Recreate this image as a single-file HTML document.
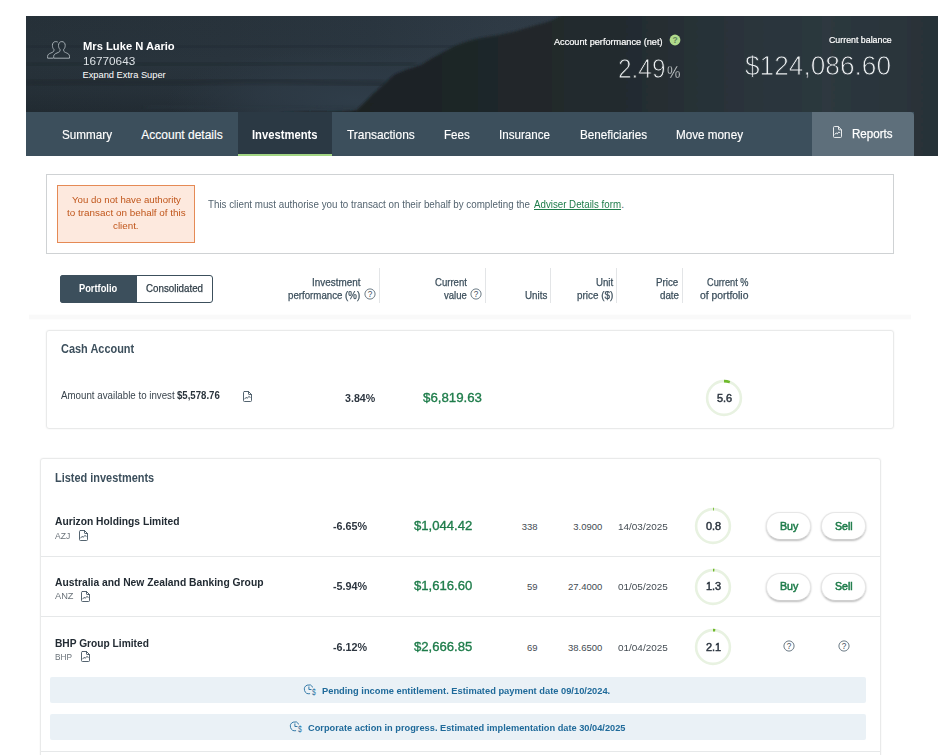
<!DOCTYPE html>
<html lang="en"><head><meta charset="utf-8"><title>Investments</title>
<style>
html,body{margin:0;padding:0;background:#fff;}
body{width:948px;height:755px;overflow:hidden;position:relative;font-family:"Liberation Sans",sans-serif;}
.t{position:absolute;white-space:nowrap;display:block;transform-origin:0 50%;}
.a{position:absolute;box-sizing:border-box;}
svg{position:absolute;overflow:visible;}
.btn{position:absolute;box-sizing:border-box;width:45px;height:28px;border-radius:14px;border:1px solid #e7e7e7;border-bottom-color:#cfcfcf;background:#fff;box-shadow:0 1px 2px rgba(0,0,0,.26);}
.sep{position:absolute;width:1px;top:268px;height:35px;background:#e3e5e7;}
.div{position:absolute;left:41px;width:839px;height:1px;background:#e6e8e9;}
.note{position:absolute;left:50px;width:816px;background:#eaf1f6;border-radius:2px;}
</style></head><body>

<!-- header background -->
<div class="a" style="left:26px;top:16px;width:912px;height:140px;background:linear-gradient(180deg,rgba(16,21,25,.06) 0%,rgba(16,21,25,0) 35%,rgba(16,21,25,.10) 55%,rgba(16,21,25,.36) 78%,rgba(16,21,25,.60) 100%),linear-gradient(90deg,#27323a 0%,#29343d 22%,#2b3741 38%,#303c47 52%,#323e49 62%,#2a3640 100%);overflow:hidden;">
<svg width="912" height="140" viewBox="0 0 912 140" style="left:0;top:0">
<defs>
<linearGradient id="hg" gradientUnits="userSpaceOnUse" x1="300" y1="0" x2="912" y2="0"><stop offset="0" stop-color="#1c2123"/><stop offset="0.30" stop-color="#20272a"/><stop offset="0.50" stop-color="#242c30"/><stop offset="0.66" stop-color="#29333a"/><stop offset="0.82" stop-color="#2d383f"/><stop offset="1" stop-color="#283238"/></linearGradient>
<radialGradient id="glow" cx="0.5" cy="0.5" r="0.5"><stop offset="0" stop-color="#2f3d49" stop-opacity="1"/><stop offset="0.5" stop-color="#2e3b47" stop-opacity="0.700"/><stop offset="1" stop-color="#2c3944" stop-opacity="0"/></radialGradient>
<filter id="bl" x="-10%" y="-10%" width="120%" height="120%"><feGaussianBlur stdDeviation="0.900"/></filter>
<filter id="bl2" x="-30%" y="-30%" width="160%" height="160%"><feGaussianBlur stdDeviation="2.600"/></filter>
</defs>
<ellipse cx="330" cy="84" rx="190" ry="52" fill="url(#glow)"/>
<path filter="url(#bl2)" d="M0 49 C80 46 160 51 260 47 C300 46 340 49 390 48" fill="none" stroke="#1d262c" stroke-width="6" opacity="0.450"/>
<path filter="url(#bl2)" d="M0 67 C60 64 130 69 200 65 C250 63 290 67 360 68" fill="none" stroke="#1a2228" stroke-width="6" opacity="0.450"/>
<path filter="url(#bl2)" d="M0 31 C90 29 170 33 270 30 C330 29 380 31 430 30" fill="none" stroke="#1f282f" stroke-width="5" opacity="0.400"/>
<path filter="url(#bl2)" d="M120 92 C180 89 240 92 290 90 C310 89 325 91 335 90" fill="none" stroke="#2c3740" stroke-width="2.500" opacity="0.700"/>
<path filter="url(#bl)" d="M255 97 C290 95 312 97 331 94 C338 87 342 83 347 78 C355 71 361 65 368 59 C378 54 386 52 395 49 C401 45 406 42 412 39 C419 35 425 32 431 29 C439 26 445 24 452 22.500 C460 21 466 20 473 19 C481 17 487 16 494 14 C503 11 510 9 518 7 C524 5 529 3 534 0 L540 -4 L930 -4 L930 145 L240 145 Z" fill="url(#hg)"/>
</svg>
</div>

<!-- nav -->
<div class="a" style="left:26px;top:112px;width:888px;height:44px;background:#3c4f5c;"></div>
<div class="a" style="left:238px;top:112px;width:94px;height:44px;background:#2b3944;border-bottom:2px solid #a2d583;"></div>
<div class="a" style="left:811.5px;top:112px;width:102.5px;height:44px;background:#5e6f7b;border-radius:0 4px 0 0;"></div>

<!-- people icon -->
<svg width="24" height="18" viewBox="0 0 24 18" style="left:45.500px;top:40.500px;transform:scaleX(-1)" fill="none" stroke="#a4adb3" stroke-width="1">
<path d="M8.2 0.6c2.1 0 3.3 1.6 3.3 3.8 0 1.6-.5 3.1-1.5 3.9v1.5c0 .8 1.3 1.5 3 2.2 1.8.7 3.3 1.500 3.300 3.300v1.900H0.500v-1.900c0-1.800 1.200-2.600 2.800-3.300 1.700-.7 3-1.400 3-2.200V8.300c-1-.8-1.500-2.300-1.500-3.900 0-2.200 1.300-3.800 3.400-3.800z"/>
<path d="M12.2 1.100c.6-.3 1.300-.5 2.100-.5 2.100 0 3.300 1.600 3.300 3.800 0 1.600-.5 3.100-1.500 3.900v1.500c0 .8 1.300 1.500 3 2.200 1.800.7 3.300 1.500 3.300 3.300v1.900h-5.600"/>
</svg>

<!-- green help -->
<svg width="12" height="12" viewBox="0 0 12 12" style="left:669.400px;top:33.500px"><circle cx="6" cy="6" r="5.400" fill="#b0da8c"/><text x="6" y="8.900" font-family="Liberation Sans, sans-serif" font-size="8.500" font-weight="bold" fill="#5f8459" text-anchor="middle">?</text></svg>

<!-- reports icon -->
<svg width="9" height="12" viewBox="0 0 9 11" preserveAspectRatio="none" style="left:833px;top:126.200px" fill="none" stroke="#f2f4f5" stroke-width="0.900"><path d="M1.400 0.500h4.100l3 3v6.100a.9.900 0 0 1-.9.900h-6.200a.9.900 0 0 1-.9-.9v-8.200a.9.900 0 0 1 .9-.9z"/><path d="M5.500 0.500v2.400a.6.600 0 0 0 .6.600h2.400"/><path d="M1.800 7.900l1.300-1.600 1.200 1 1.400-1.800 1.500.7"/></svg>

<!-- alert -->
<div class="a" style="left:46px;top:174px;width:848px;height:80px;border:1px solid #cfd2d4;"></div>
<div class="a" style="left:57px;top:185px;width:138px;height:58px;background:#fde9de;border:1px solid #e58a55;"></div>

<!-- toggle -->
<div class="a" style="left:60px;top:275px;width:153px;height:28px;border:1px solid #3c4f5c;border-radius:3px;background:#fff;"></div>
<div class="a" style="left:60px;top:275px;width:77px;height:28px;background:#3c4f5c;border-radius:3px 0 0 3px;"></div>

<!-- table head separators -->
<div class="sep" style="left:379px"></div><div class="sep" style="left:485px"></div><div class="sep" style="left:550px"></div><div class="sep" style="left:616px"></div><div class="sep" style="left:682px"></div>

<!-- help icons in header row -->
<svg width="12" height="12" viewBox="0 0 12 12" style="left:363.800px;top:287.600px"><circle cx="6" cy="6" r="5.100" fill="none" stroke="#64747f" stroke-width="0.950"/><text x="6" y="8.900" font-family="Liberation Sans, sans-serif" font-size="8.200" fill="#3f4f5a" text-anchor="middle">?</text></svg>
<svg width="12" height="12" viewBox="0 0 12 12" style="left:470.100px;top:287.600px"><circle cx="6" cy="6" r="5.100" fill="none" stroke="#64747f" stroke-width="0.950"/><text x="6" y="8.900" font-family="Liberation Sans, sans-serif" font-size="8.200" fill="#3f4f5a" text-anchor="middle">?</text></svg>

<!-- sticky shadow -->
<div class="a" style="left:29px;top:313.500px;width:881.500px;height:6px;background:linear-gradient(180deg,rgba(0,0,0,0) 0%,rgba(0,0,0,.022) 25%,rgba(0,0,0,.022) 75%,rgba(0,0,0,0) 100%);"></div>

<!-- cash card -->
<div class="a" style="left:46px;top:330px;width:848px;height:99px;border:1px solid #e9eaea;border-radius:3px;box-shadow:0 0 1.500px rgba(0,0,0,.09);"></div>
<svg width="9" height="11" viewBox="0 0 9 11" style="left:243px;top:391px" fill="none" stroke="#4b5c68" stroke-width="0.950" stroke-linejoin="round" stroke-linecap="round"><path d="M1.400 0.500h4.100l3 3v6.100a.9.900 0 0 1-.9.900h-6.200a.9.900 0 0 1-.9-.9v-8.200a.9.900 0 0 1 .9-.9z"/><path d="M5.500 0.500v2.400a.6.600 0 0 0 .6.600h2.400"/><path d="M1.800 7.900l1.300-1.600 1.200 1 1.400-1.800 1.500.7"/></svg>

<!-- donut cash -->
<svg width="38" height="38" viewBox="-19 -19 38 38" style="left:705.200px;top:379px"><circle r="16.900" fill="none" stroke="#e8f2e1" stroke-width="2.600"/><path d="M0 -16.900 A16.900 16.900 0 0 1 5.830 -15.860" fill="none" stroke="#6fba2c" stroke-width="2.600"/></svg>

<!-- listed card -->
<div class="a" style="left:40px;top:458px;width:841px;height:320px;border:1px solid #e9eaea;border-radius:3px;box-shadow:0 0 1.500px rgba(0,0,0,.09);"></div>
<div class="div" style="top:556px"></div>
<div class="div" style="top:616px"></div>
<div class="div" style="top:751px"></div>

<!-- doc icons rows -->
<svg width="9" height="11" viewBox="0 0 9 11" style="left:79px;top:530px" fill="none" stroke="#4b5c68" stroke-width="0.950" stroke-linejoin="round" stroke-linecap="round"><path d="M1.400 0.500h4.100l3 3v6.100a.9.900 0 0 1-.9.900h-6.200a.9.900 0 0 1-.9-.9v-8.200a.9.900 0 0 1 .9-.9z"/><path d="M5.500 0.500v2.400a.6.600 0 0 0 .6.600h2.400"/><path d="M1.800 7.900l1.300-1.600 1.200 1 1.400-1.800 1.500.7"/></svg>
<svg width="9" height="11" viewBox="0 0 9 11" style="left:81px;top:590.500px" fill="none" stroke="#4b5c68" stroke-width="0.950" stroke-linejoin="round" stroke-linecap="round"><path d="M1.400 0.500h4.100l3 3v6.100a.9.900 0 0 1-.9.900h-6.200a.9.900 0 0 1-.9-.9v-8.200a.9.900 0 0 1 .9-.9z"/><path d="M5.500 0.500v2.400a.6.600 0 0 0 .6.600h2.400"/><path d="M1.800 7.900l1.300-1.600 1.200 1 1.400-1.800 1.500.7"/></svg>
<svg width="9" height="11" viewBox="0 0 9 11" style="left:80.600px;top:651.400px" fill="none" stroke="#4b5c68" stroke-width="0.950" stroke-linejoin="round" stroke-linecap="round"><path d="M1.400 0.500h4.100l3 3v6.100a.9.900 0 0 1-.9.900h-6.200a.9.900 0 0 1-.9-.9v-8.200a.9.900 0 0 1 .9-.9z"/><path d="M5.500 0.500v2.400a.6.600 0 0 0 .6.600h2.400"/><path d="M1.800 7.900l1.300-1.600 1.200 1 1.400-1.800 1.500.7"/></svg>

<!-- donuts rows -->
<svg width="38" height="38" viewBox="-19 -19 38 38" style="left:694.400px;top:507px"><circle r="16.900" fill="none" stroke="#e8f2e1" stroke-width="2.600"/><path d="M0 -16.900 A16.900 16.900 0 0 1 0.850 -16.880" fill="none" stroke="#6fba2c" stroke-width="2.600"/></svg>
<svg width="38" height="38" viewBox="-19 -19 38 38" style="left:694.400px;top:567.600px"><circle r="16.900" fill="none" stroke="#e8f2e1" stroke-width="2.600"/><path d="M0 -16.900 A16.900 16.900 0 0 1 1.380 -16.840" fill="none" stroke="#6fba2c" stroke-width="2.600"/></svg>
<svg width="38" height="38" viewBox="-19 -19 38 38" style="left:694.400px;top:628px"><circle r="16.900" fill="none" stroke="#e8f2e1" stroke-width="2.600"/><path d="M0 -16.900 A16.900 16.900 0 0 1 2.220 -16.750" fill="none" stroke="#6fba2c" stroke-width="2.600"/></svg>

<!-- buttons -->
<div class="btn" style="left:766px;top:512px"></div><div class="btn" style="left:821px;top:512px"></div>
<div class="btn" style="left:766px;top:572.500px"></div><div class="btn" style="left:821px;top:572.500px"></div>

<!-- row3 help icons -->
<svg width="12" height="12" viewBox="0 0 12 12" style="left:782.900px;top:639.500px"><circle cx="6" cy="6" r="5.100" fill="none" stroke="#64747f" stroke-width="0.950"/><text x="6" y="8.900" font-family="Liberation Sans, sans-serif" font-size="8.200" fill="#3f4f5a" text-anchor="middle">?</text></svg>
<svg width="12" height="12" viewBox="0 0 12 12" style="left:837.900px;top:639.500px"><circle cx="6" cy="6" r="5.100" fill="none" stroke="#64747f" stroke-width="0.950"/><text x="6" y="8.900" font-family="Liberation Sans, sans-serif" font-size="8.200" fill="#3f4f5a" text-anchor="middle">?</text></svg>

<!-- notices -->
<div class="note" style="top:677.300px;height:25.500px"></div>
<div class="note" style="top:714.200px;height:25.800px"></div>
<svg width="13" height="12" viewBox="0 0 13 12" style="left:304px;top:684px" fill="none" stroke="#2a73a3" stroke-width="0.950" stroke-linecap="round"><path d="M8.800 3.050A4.500 4.500 0 1 0 5.700 9.730"/><path d="M4.900 2.900v2.600h2.200"/><text x="9.900" y="11.300" font-family="Liberation Sans, sans-serif" font-size="8.300" textLength="3.800" lengthAdjust="spacingAndGlyphs" fill="#2a73a3" stroke="none" text-anchor="middle">$</text></svg>
<svg width="13" height="12" viewBox="0 0 13 12" style="left:289.500px;top:721.300px" fill="none" stroke="#2a73a3" stroke-width="0.950" stroke-linecap="round"><path d="M8.800 3.050A4.500 4.500 0 1 0 5.700 9.730"/><path d="M4.900 2.900v2.600h2.200"/><text x="9.900" y="11.300" font-family="Liberation Sans, sans-serif" font-size="8.300" textLength="3.800" lengthAdjust="spacingAndGlyphs" fill="#2a73a3" stroke="none" text-anchor="middle">$</text></svg>

<span class="t" style="left:82.50px;top:40.35px;font-size:11.7px;line-height:11.7px;color:#fff;font-weight:bold;transform:scaleX(0.9583);">Mrs Luke N Aario</span>
<span class="t" style="left:82.50px;top:55.52px;font-size:11.5px;line-height:11.5px;color:#dde2e6;transform:scaleX(1.0201);">16770643</span>
<span class="t" style="left:82.50px;top:71.38px;font-size:9.3px;line-height:9.3px;color:#fff;">Expand Extra Super</span>
<span class="t" style="left:554.00px;top:37.63px;font-size:9px;line-height:9px;color:#fff;transform:scaleX(1.0182);-webkit-text-stroke:0.2px currentColor;">Account performance (net)</span>
<span class="t" style="left:828.80px;top:35.63px;font-size:9px;line-height:9px;color:#fff;transform:scaleX(0.9790);-webkit-text-stroke:0.2px currentColor;">Current balance</span>
<span class="t" style="left:744.80px;top:51.38px;font-size:28.2px;line-height:28.2px;color:#eef1f3;transform:scaleX(0.9313);-webkit-text-stroke:0.9px #2c373e;">$124,086.60</span>
<span class="t" style="left:618.00px;top:54.97px;font-size:27.5px;line-height:27.5px;color:#eef1f3;transform:scaleX(0.8873);-webkit-text-stroke:0.9px #252d31;">2.49</span>
<span class="t" style="left:666.50px;top:64.71px;font-size:16px;line-height:16px;color:#eef1f3;transform:scaleX(0.9484);-webkit-text-stroke:0.4px #252d31;">%</span>
<a class="t" style="left:61.50px;top:129.09px;font-size:12px;line-height:12px;color:#fff;transform:scaleX(0.9738);-webkit-text-stroke:0.15px currentColor;">Summary</a>
<a class="t" style="left:141.30px;top:129.09px;font-size:12px;line-height:12px;color:#fff;-webkit-text-stroke:0.15px currentColor;">Account details</a>
<a class="t" style="left:252.20px;top:129.09px;font-size:12px;line-height:12px;color:#fff;font-weight:bold;transform:scaleX(0.9353);">Investments</a>
<a class="t" style="left:347.30px;top:129.09px;font-size:12px;line-height:12px;color:#fff;transform:scaleX(0.9919);-webkit-text-stroke:0.15px currentColor;">Transactions</a>
<a class="t" style="left:444.30px;top:129.09px;font-size:12px;line-height:12px;color:#fff;transform:scaleX(0.9630);-webkit-text-stroke:0.15px currentColor;">Fees</a>
<a class="t" style="left:499.00px;top:129.09px;font-size:12px;line-height:12px;color:#fff;transform:scaleX(0.9677);-webkit-text-stroke:0.15px currentColor;">Insurance</a>
<a class="t" style="left:579.50px;top:129.09px;font-size:12px;line-height:12px;color:#fff;transform:scaleX(0.9752);-webkit-text-stroke:0.15px currentColor;">Beneficiaries</a>
<a class="t" style="left:676.00px;top:129.09px;font-size:12px;line-height:12px;color:#fff;transform:scaleX(0.9752);-webkit-text-stroke:0.15px currentColor;">Move money</a>
<a class="t" style="left:851.50px;top:128.09px;font-size:12px;line-height:12px;color:#fff;transform:scaleX(0.9636);-webkit-text-stroke:0.25px currentColor;">Reports</a>
<span class="t" style="left:71.55px;top:195.21px;font-size:9.5px;line-height:9.5px;color:#c0561b;transform:scaleX(1.0139);">You do not have authority</span>
<span class="t" style="left:66.65px;top:208.21px;font-size:9.5px;line-height:9.5px;color:#c0561b;transform:scaleX(1.0405);">to transact on behalf of this</span>
<span class="t" style="left:113.20px;top:221.21px;font-size:9.5px;line-height:9.5px;color:#c0561b;transform:scaleX(1.0311);">client.</span>
<span class="t" style="left:208.00px;top:199.62px;font-size:10.2px;line-height:10.2px;color:#53636f;transform:scaleX(0.9605);">This client must authorise you to transact on their behalf by completing the</span>
<a class="t" style="left:534.00px;top:199.62px;font-size:10.2px;line-height:10.2px;color:#1e7c4a;transform:scaleX(0.9544);text-decoration:underline;">Adviser Details form</a>
<span class="t" style="left:621.30px;top:199.62px;font-size:10.2px;line-height:10.2px;color:#53636f;">.</span>
<span class="t" style="left:78.70px;top:283.53px;font-size:10.3px;line-height:10.3px;color:#fff;font-weight:bold;transform:scaleX(0.9025);">Portfolio</span>
<span class="t" style="left:145.80px;top:283.53px;font-size:10.3px;line-height:10.3px;color:#2f3d47;transform:scaleX(0.9483);-webkit-text-stroke:0.25px currentColor;">Consolidated</span>
<span class="t" style="left:312.00px;top:277.53px;font-size:10.3px;line-height:10.3px;color:#3c4f5c;transform:scaleX(0.9608);-webkit-text-stroke:0.25px currentColor;">Investment</span>
<span class="t" style="left:288.20px;top:290.53px;font-size:10.3px;line-height:10.3px;color:#3c4f5c;transform:scaleX(0.9415);-webkit-text-stroke:0.25px currentColor;">performance (%)</span>
<span class="t" style="left:435.10px;top:277.53px;font-size:10.3px;line-height:10.3px;color:#3c4f5c;transform:scaleX(0.9288);-webkit-text-stroke:0.25px currentColor;">Current</span>
<span class="t" style="left:444.20px;top:290.53px;font-size:10.3px;line-height:10.3px;color:#3c4f5c;transform:scaleX(0.9259);-webkit-text-stroke:0.25px currentColor;">value</span>
<span class="t" style="left:524.70px;top:290.53px;font-size:10.3px;line-height:10.3px;color:#3c4f5c;transform:scaleX(0.9502);-webkit-text-stroke:0.25px currentColor;">Units</span>
<span class="t" style="left:595.80px;top:277.53px;font-size:10.3px;line-height:10.3px;color:#3c4f5c;transform:scaleX(0.9392);-webkit-text-stroke:0.25px currentColor;">Unit</span>
<span class="t" style="left:576.80px;top:290.53px;font-size:10.3px;line-height:10.3px;color:#3c4f5c;transform:scaleX(0.9585);-webkit-text-stroke:0.25px currentColor;">price ($)</span>
<span class="t" style="left:656.20px;top:277.53px;font-size:10.3px;line-height:10.3px;color:#3c4f5c;transform:scaleX(0.9502);-webkit-text-stroke:0.25px currentColor;">Price</span>
<span class="t" style="left:659.50px;top:290.53px;font-size:10.3px;line-height:10.3px;color:#3c4f5c;transform:scaleX(0.9478);-webkit-text-stroke:0.25px currentColor;">date</span>
<span class="t" style="left:706.50px;top:277.53px;font-size:10.3px;line-height:10.3px;color:#3c4f5c;transform:scaleX(0.8952);-webkit-text-stroke:0.25px currentColor;">Current %</span>
<span class="t" style="left:699.60px;top:290.53px;font-size:10.3px;line-height:10.3px;color:#3c4f5c;transform:scaleX(1.0064);-webkit-text-stroke:0.25px currentColor;">of portfolio</span>
<span class="t" style="left:60.80px;top:342.92px;font-size:12.2px;line-height:12.2px;color:#3c4f5c;font-weight:bold;transform:scaleX(0.8982);">Cash Account</span>
<span class="t" style="left:60.50px;top:390.79px;font-size:10px;line-height:10px;color:#39444d;transform:scaleX(0.9740);">Amount available to invest</span>
<span class="t" style="left:177.20px;top:390.79px;font-size:10px;line-height:10px;color:#2a343c;font-weight:bold;transform:scaleX(0.9618);">$5,578.76</span>
<span class="t" style="left:345.00px;top:392.52px;font-size:11.5px;line-height:11.5px;color:#2d3640;font-weight:bold;transform:scaleX(0.9261);">3.84%</span>
<span class="t" style="left:422.50px;top:390.82px;font-size:13.5px;line-height:13.5px;color:#1e7c4a;transform:scaleX(0.9823);-webkit-text-stroke:0.35px currentColor;">$6,819.63</span>
<span class="t" style="left:716.60px;top:392.52px;font-size:11.5px;line-height:11.5px;color:#2d3640;transform:scaleX(0.9500);-webkit-text-stroke:0.5px currentColor;">5.6</span>
<span class="t" style="left:54.80px;top:471.92px;font-size:12.2px;line-height:12.2px;color:#3c4f5c;font-weight:bold;transform:scaleX(0.8985);">Listed investments</span>
<span class="t" style="left:54.80px;top:515.52px;font-size:11.5px;line-height:11.5px;color:#222b33;font-weight:bold;transform:scaleX(0.8939);">Aurizon Holdings Limited</span>
<span class="t" style="left:54.80px;top:532.05px;font-size:8.5px;line-height:8.5px;color:#6b737a;transform:scaleX(1.0050);">AZJ</span>
<span class="t" style="left:332.90px;top:520.52px;font-size:11.5px;line-height:11.5px;color:#2d3640;font-weight:bold;transform:scaleX(0.9386);">-6.65%</span>
<span class="t" style="left:413.90px;top:518.82px;font-size:13.5px;line-height:13.5px;color:#1e7c4a;transform:scaleX(0.9707);-webkit-text-stroke:0.35px currentColor;">$1,044.42</span>
<span class="t" style="left:521.64px;top:522.21px;font-size:9.5px;line-height:9.5px;color:#444c53;">338</span>
<span class="t" style="left:573.24px;top:522.21px;font-size:9.5px;line-height:9.5px;color:#444c53;">3.0900</span>
<span class="t" style="left:617.50px;top:522.21px;font-size:9.5px;line-height:9.5px;color:#444c53;transform:scaleX(1.0474);">14/03/2025</span>
<span class="t" style="left:705.80px;top:520.52px;font-size:11.5px;line-height:11.5px;color:#2d3640;transform:scaleX(0.9500);-webkit-text-stroke:0.5px currentColor;">0.8</span>
<span class="t" style="left:54.80px;top:576.52px;font-size:11.5px;line-height:11.5px;color:#222b33;font-weight:bold;transform:scaleX(0.8964);">Australia and New Zealand Banking Group</span>
<span class="t" style="left:54.80px;top:592.05px;font-size:8.5px;line-height:8.5px;color:#6b737a;transform:scaleX(1.0882);">ANZ</span>
<span class="t" style="left:332.90px;top:580.52px;font-size:11.5px;line-height:11.5px;color:#2d3640;font-weight:bold;transform:scaleX(0.9386);">-5.94%</span>
<span class="t" style="left:413.90px;top:578.82px;font-size:13.5px;line-height:13.5px;color:#1e7c4a;transform:scaleX(0.9707);-webkit-text-stroke:0.35px currentColor;">$1,616.60</span>
<span class="t" style="left:526.92px;top:582.21px;font-size:9.5px;line-height:9.5px;color:#444c53;">59</span>
<span class="t" style="left:567.96px;top:582.21px;font-size:9.5px;line-height:9.5px;color:#444c53;">27.4000</span>
<span class="t" style="left:617.50px;top:582.21px;font-size:9.5px;line-height:9.5px;color:#444c53;transform:scaleX(1.0474);">01/05/2025</span>
<span class="t" style="left:705.80px;top:580.52px;font-size:11.5px;line-height:11.5px;color:#2d3640;transform:scaleX(0.9500);-webkit-text-stroke:0.5px currentColor;">1.3</span>
<span class="t" style="left:54.80px;top:637.52px;font-size:11.5px;line-height:11.5px;color:#222b33;font-weight:bold;transform:scaleX(0.8870);">BHP Group Limited</span>
<span class="t" style="left:54.80px;top:653.05px;font-size:8.5px;line-height:8.5px;color:#6b737a;transform:scaleX(0.9723);">BHP</span>
<span class="t" style="left:332.90px;top:641.52px;font-size:11.5px;line-height:11.5px;color:#2d3640;font-weight:bold;transform:scaleX(0.9386);">-6.12%</span>
<span class="t" style="left:413.90px;top:639.82px;font-size:13.5px;line-height:13.5px;color:#1e7c4a;transform:scaleX(0.9707);-webkit-text-stroke:0.35px currentColor;">$2,666.85</span>
<span class="t" style="left:526.92px;top:643.21px;font-size:9.5px;line-height:9.5px;color:#444c53;">69</span>
<span class="t" style="left:567.96px;top:643.21px;font-size:9.5px;line-height:9.5px;color:#444c53;">38.6500</span>
<span class="t" style="left:617.50px;top:643.21px;font-size:9.5px;line-height:9.5px;color:#444c53;transform:scaleX(1.0474);">01/04/2025</span>
<span class="t" style="left:705.80px;top:641.52px;font-size:11.5px;line-height:11.5px;color:#2d3640;transform:scaleX(0.9500);-webkit-text-stroke:0.5px currentColor;">2.1</span>
<span class="t" style="left:779.70px;top:520.52px;font-size:11.5px;line-height:11.5px;color:#1e7c4a;transform:scaleX(0.9280);-webkit-text-stroke:0.55px currentColor;">Buy</span>
<span class="t" style="left:835.05px;top:520.52px;font-size:11.5px;line-height:11.5px;color:#1e7c4a;transform:scaleX(0.9225);-webkit-text-stroke:0.55px currentColor;">Sell</span>
<span class="t" style="left:779.70px;top:580.52px;font-size:11.5px;line-height:11.5px;color:#1e7c4a;transform:scaleX(0.9280);-webkit-text-stroke:0.55px currentColor;">Buy</span>
<span class="t" style="left:835.05px;top:580.52px;font-size:11.5px;line-height:11.5px;color:#1e7c4a;transform:scaleX(0.9225);-webkit-text-stroke:0.55px currentColor;">Sell</span>
<span class="t" style="left:322.40px;top:686.21px;font-size:9.5px;line-height:9.5px;color:#1f6a9a;font-weight:bold;transform:scaleX(0.9800);">Pending income entitlement. Estimated payment date 09/10/2024.</span>
<span class="t" style="left:307.50px;top:723.21px;font-size:9.5px;line-height:9.5px;color:#1f6a9a;font-weight:bold;transform:scaleX(0.9731);">Corporate action in progress. Estimated implementation date 30/04/2025</span>
</body></html>
